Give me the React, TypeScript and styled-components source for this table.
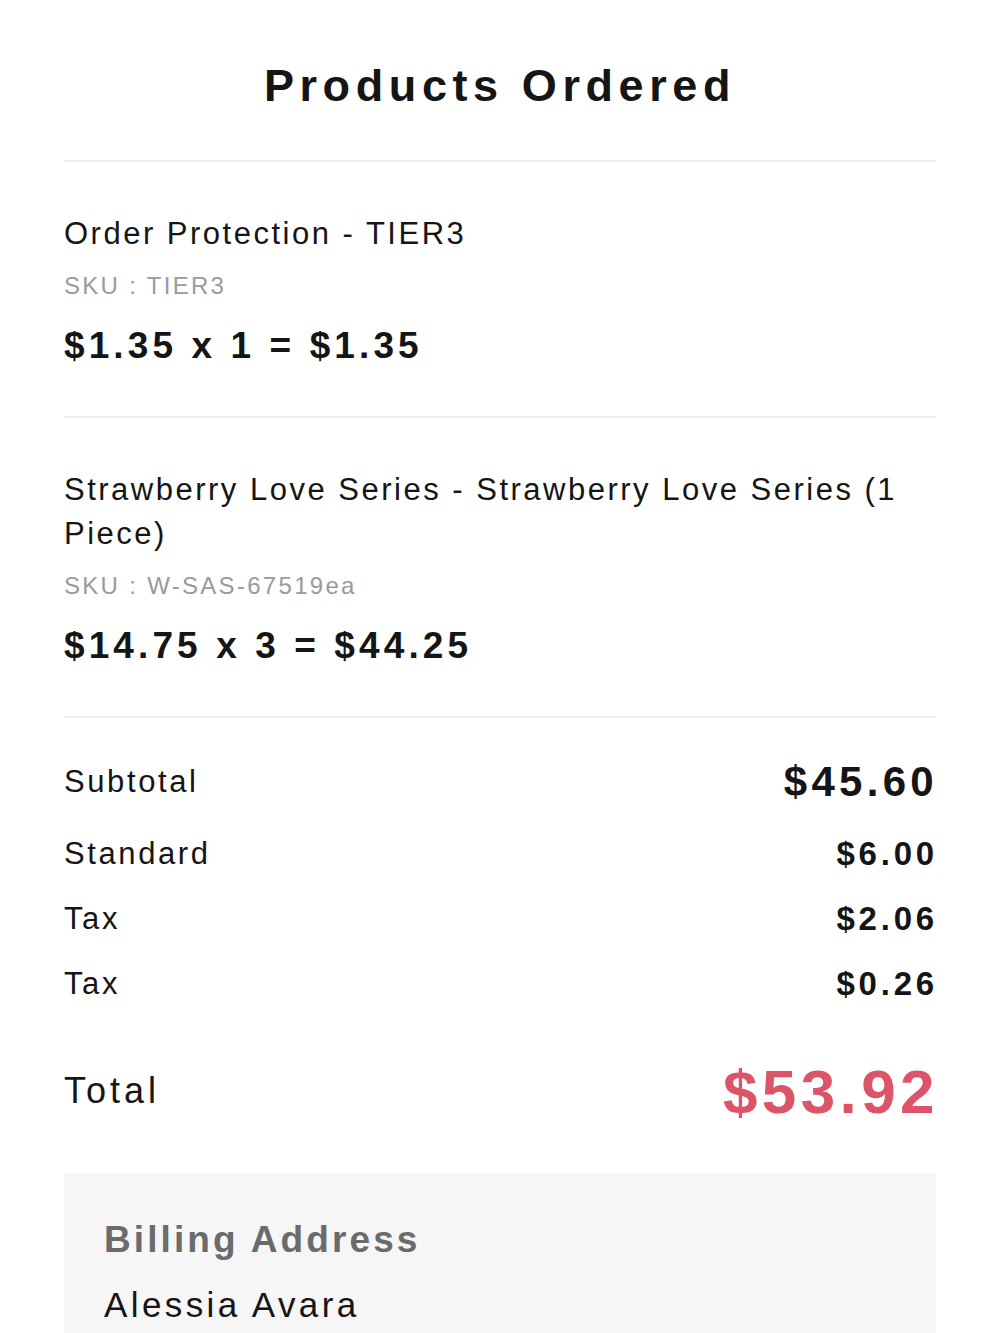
import React from 'react';
import styled, { createGlobalStyle } from 'styled-components';

const GlobalStyle = createGlobalStyle`
    body {
        margin: 0;
        background: #fff;
        font-family: 'Liberation Sans', Arial, sans-serif;
        color: #111;
    }
`;

const Page = styled.div`
    padding: 0 64px;
    box-sizing: border-box;
    width: 1000px;
`;

const Title = styled.h1`
    margin: 0;
    padding: 50px 0 38px;
    text-align: center;
    font-size: 45px;
    font-weight: 700;
    letter-spacing: 5.6px;
    line-height: 72px;
    color: #151515;
    border-bottom: 2px solid #eee;
`;

const Item = styled.div`
    padding: 50px 0 44px;
    border-bottom: 2px solid #eee;
`;

const ItemName = styled.div`
    font-size: 31px;
    line-height: 44px;
    letter-spacing: 2.5px;
    color: #151515;
`;

const Sku = styled.div`
    margin-top: 10px;
    font-size: 24px;
    line-height: 40px;
    letter-spacing: 2.3px;
    color: #9a9a9a;
`;

const Price = styled.div`
    margin-top: 14px;
    font-size: 37px;
    line-height: 52px;
    font-weight: 700;
    letter-spacing: 4.1px;
    color: #151515;
`;

const Summary = styled.div`
    padding-top: 24px;
`;

const Row = styled.div<{ tall?: boolean }>`
    display: flex;
    justify-content: space-between;
    align-items: center;
    height: ${({ tall }) => (tall ? 79 : 65)}px;
`;

const Label = styled.span`
    font-size: 31px;
    letter-spacing: 2.6px;
    color: #151515;
`;

const Value = styled.span<{ big?: boolean }>`
    font-size: ${({ big }) => (big ? 42 : 33)}px;
    font-weight: 700;
    letter-spacing: ${({ big }) => (big ? 4.3 : 3.8)}px;
    margin-right: -2px;
    color: #151515;
`;

const TotalRow = styled.div`
    display: flex;
    justify-content: space-between;
    align-items: center;
    margin-top: 35px;
    height: 80px;
`;

const TotalLabel = styled.span`
    font-size: 36px;
    letter-spacing: 4px;
    color: #151515;
`;

const TotalValue = styled.span`
    font-size: 62px;
    font-weight: 700;
    letter-spacing: 4.4px;
    margin-right: -3px;
    color: #dc5467;
`;

const Billing = styled.div`
    margin-top: 42px;
    background: #f6f6f6;
    padding: 41px 40px 40px;
`;

const BillingTitle = styled.div`
    font-size: 37px;
    line-height: 52px;
    font-weight: 700;
    letter-spacing: 3.1px;
    color: #6b6b6b;
`;

const BillingLine = styled.div`
    margin-top: 15px;
    font-size: 35px;
    line-height: 48px;
    letter-spacing: 3.4px;
    color: #151515;
`;

const items = [
    {
        name: 'Order Protection - TIER3',
        sku: 'TIER3',
        price: '$1.35 x 1 = $1.35',
    },
    {
        name: 'Strawberry Love Series - Strawberry Love Series (1 Piece)',
        sku: 'W-SAS-67519ea',
        price: '$14.75 x 3 = $44.25',
    },
];

const lines = [
    { label: 'Subtotal', value: '$45.60', big: true },
    { label: 'Standard', value: '$6.00' },
    { label: 'Tax', value: '$2.06' },
    { label: 'Tax', value: '$0.26' },
];

const App = () => (
    <Page>
        <GlobalStyle />
        <Title>Products Ordered</Title>
        {items.map((item) => (
            <Item key={item.sku}>
                <ItemName>{item.name}</ItemName>
                <Sku>SKU : {item.sku}</Sku>
                <Price>{item.price}</Price>
            </Item>
        ))}
        <Summary>
            {lines.map((line, i) => (
                <Row key={i} tall={line.big}>
                    <Label>{line.label}</Label>
                    <Value big={line.big}>{line.value}</Value>
                </Row>
            ))}
            <TotalRow>
                <TotalLabel>Total</TotalLabel>
                <TotalValue>$53.92</TotalValue>
            </TotalRow>
        </Summary>
        <Billing>
            <BillingTitle>Billing Address</BillingTitle>
            <BillingLine>Alessia Avara</BillingLine>
        </Billing>
    </Page>
);

export default App;
